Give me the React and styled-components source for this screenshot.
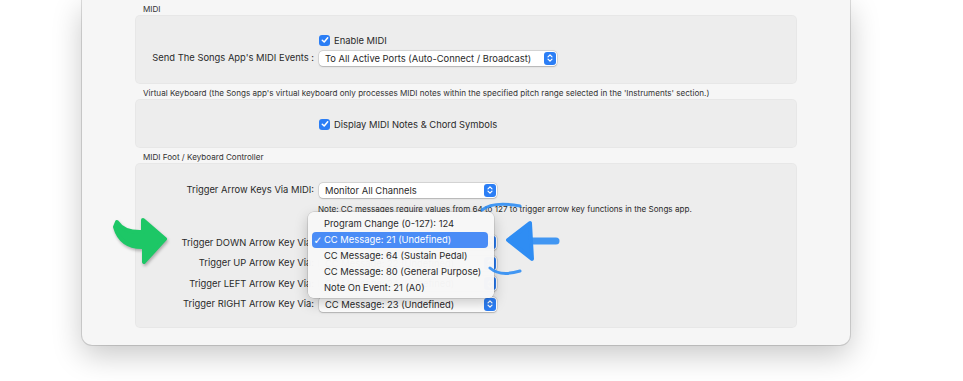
import styled, { createGlobalStyle } from "styled-components";

const GlobalStyle = createGlobalStyle`
  html, body {
    margin: 0;
    padding: 0;
    background: #ffffff;
  }
  body {
    font-family: "Inter", "Liberation Sans", sans-serif;
    color: #262626;
    -webkit-font-smoothing: antialiased;
  }
`;

const Page = styled.div`
  width: 963px;
  height: 381px;
  overflow: hidden;
`;

/* Preferences window, its top is cut off by the screenshot */
const Window = styled.div`
  position: relative;
  margin-left: 82px;
  width: 768px;
  height: 345px;
  box-sizing: border-box;
  padding: 3px 53px 0;
  background: #f6f6f6;
  border-radius: 0 0 10px 10px;
  box-shadow:
    0 0 0 1px rgba(0, 0, 0, 0.13),
    0 10px 30px rgba(0, 0, 0, 0.22);
`;

const SectionLabel = styled.div`
  height: 12px;
  line-height: 13px;
  padding-left: 8px;
  font-size: 8.1px;
  color: #333;
  white-space: nowrap;
`;

const Box = styled.div`
  position: relative;
  height: ${(p) => p.$h}px;
  box-sizing: border-box;
  padding-top: ${(p) => p.$pt}px;
  margin-bottom: 3px;
  background: #ededed;
  border-radius: 5px;
  box-shadow: inset 0 0 0 1px rgba(0, 0, 0, 0.025);
  display: grid;
  grid-template-columns: 179px auto;
  column-gap: 5px;
  align-content: start;
  row-gap: ${(p) => p.$gap || 0}px;
`;

const Label = styled.div`
  height: ${(p) => p.$h || 16}px;
  line-height: ${(p) => p.$h || 16}px;
  text-align: right;
  font-size: 9.4px;
  white-space: nowrap;
  color: #2a2a2a;
`;

const Control = styled.div`
  display: flex;
  align-items: center;
  height: ${(p) => p.$h || 16}px;
  margin-left: ${(p) => p.$ml || 0}px;
`;

const CheckLine = styled.label`
  display: flex;
  align-items: center;
  gap: 4px;
  font-size: 9.4px;
  color: #2a2a2a;
  white-space: nowrap;
`;

const CheckBox = styled.span`
  width: 11px;
  height: 11px;
  border-radius: 3px;
  background: #2b7ef5;
  display: flex;
  align-items: center;
  justify-content: center;
`;

const SelectBox = styled.div`
  width: ${(p) => p.$w}px;
  height: 15px;
  box-sizing: border-box;
  display: flex;
  align-items: center;
  justify-content: space-between;
  padding: 0 1px 0 6px;
  background: #ffffff;
  border-radius: 4px;
  box-shadow:
    0 0 0 0.5px rgba(0, 0, 0, 0.16),
    0 0.5px 1.5px rgba(0, 0, 0, 0.18);
  font-size: 9.4px;
  color: #2a2a2a;
  white-space: nowrap;
`;

const Stepper = styled.span`
  width: 12px;
  height: 13px;
  border-radius: 3px;
  background: #2b7ef5;
  display: flex;
  align-items: center;
  justify-content: center;
`;

const Note = styled.div`
  height: 12px;
  line-height: 12px;
  font-size: 8.1px;
  color: #2a2a2a;
  white-space: nowrap;
`;

const Menu = styled.div`
  position: absolute;
  left: 173px;
  top: 49px;
  width: 186px;
  box-sizing: border-box;
  padding: 4px 6px 2px 4px;
  background: rgba(247, 247, 247, 0.98);
  border-radius: 6px;
  box-shadow:
    0 0 0 0.5px rgba(0, 0, 0, 0.18),
    0 5px 14px rgba(0, 0, 0, 0.22);
  z-index: 2;
`;

const MenuItem = styled.div`
  position: relative;
  height: 16px;
  line-height: 16px;
  padding-left: 12px;
  border-radius: 4px;
  font-size: 9.4px;
  white-space: nowrap;
  color: ${(p) => (p.$active ? "#ffffff" : "#2a2a2a")};
  background: ${(p) => (p.$active ? "#4a8cf6" : "transparent")};
`;

const Tick = styled.span`
  position: absolute;
  left: 1.5px;
  top: 0;
  font-size: 10.5px;
  font-family: "DejaVu Sans", sans-serif;
`;

const GreenArrow = styled.svg`
  position: absolute;
  left: 28px;
  top: 212px;
  filter: drop-shadow(1px 2px 1.5px rgba(0, 0, 0, 0.28));
  z-index: 3;
`;

const BlueMarks = styled.svg`
  position: absolute;
  left: 396px;
  top: 198px;
  z-index: 3;
`;

function Check() {
  return (
    <CheckBox>
      <svg width="8" height="8" viewBox="0 0 8 8">
        <path d="M1.3 4.2 L3.2 6 L6.7 1.8" fill="none" stroke="#fff" strokeWidth="1.5" strokeLinecap="round" strokeLinejoin="round" />
      </svg>
    </CheckBox>
  );
}

function Select({ width, children }) {
  return (
    <SelectBox $w={width}>
      <span>{children}</span>
      <Stepper>
        <svg width="8" height="10" viewBox="0 0 8 10">
          <path d="M2 3.8 L4 1.8 L6 3.8 M2 6.2 L4 8.2 L6 6.2" fill="none" stroke="#fff" strokeWidth="1.2" strokeLinecap="round" strokeLinejoin="round" />
        </svg>
      </Stepper>
    </SelectBox>
  );
}

const arrowRows = [
  ["Trigger DOWN Arrow Key Via:", "CC Message: 21 (Undefined)"],
  ["Trigger UP Arrow Key Via:", "CC Message: 22 (Undefined)"],
  ["Trigger LEFT Arrow Key Via:", "CC Message: 24 (Undefined)"],
  ["Trigger RIGHT Arrow Key Via:", "CC Message: 23 (Undefined)"],
];

const menuItems = [
  "Program Change (0-127): 124",
  "CC Message: 21 (Undefined)",
  "CC Message: 64 (Sustain Pedal)",
  "CC Message: 80 (General Purpose)",
  "Note On Event: 21 (A0)",
];

export default function App() {
  return (
    <Page>
      <GlobalStyle />
      <Window>
        <SectionLabel>MIDI</SectionLabel>
        <Box $h={69} $pt={18} $gap={3}>
          <Label $h={14} />
          <Control $h={14}>
            <CheckLine>
              <Check />
              Enable MIDI
            </CheckLine>
          </Control>
          <Label>Send The Songs App's MIDI Events :</Label>
          <Control>
            <Select width={238}>To All Active Ports (Auto-Connect / Broadcast)</Select>
          </Control>
        </Box>

        <SectionLabel>
          Virtual Keyboard (the Songs app's virtual keyboard only processes MIDI notes within the specified pitch range selected in the 'Instruments' section.)
        </SectionLabel>
        <Box $h={49} $pt={18}>
          <Label $h={14} />
          <Control $h={14}>
            <CheckLine>
              <Check />
              Display MIDI Notes &amp; Chord Symbols
            </CheckLine>
          </Control>
        </Box>

        <SectionLabel>MIDI Foot / Keyboard Controller</SectionLabel>
        <Box $h={165} $pt={19} $gap={4.5}>
          <Label>Trigger Arrow Keys Via MIDI:</Label>
          <Control>
            <Select width={178}>Monitor All Channels</Select>
          </Control>
          <Label $h={12} />
          <Control $h={12} $ml={-1}>
            <Note>Note: CC messages require values from 64 to 127 to trigger arrow key functions in the Songs app.</Note>
          </Control>
          <Label $h={11} />
          <Control $h={11} />
          {arrowRows.map(([label, value]) => (
            <>
              <Label key={label}>{label}</Label>
              <Control key={label + "c"}>
                <Select width={178}>{value}</Select>
              </Control>
            </>
          ))}

          <Menu>
            {menuItems.map((item, i) => (
              <MenuItem key={item} $active={i === 1}>
                {i === 1 && <Tick>✓</Tick>}
                {item}
              </MenuItem>
            ))}
          </Menu>
        </Box>

        <GreenArrow width="62" height="56" viewBox="0 0 62 56">
          <path
            d="M7 10 Q14 21 33 20 L33 8 L55 27 L34 50 L34 35 Q11 36 5 15 Z"
            fill="#1dc766"
            stroke="#1dc766"
            strokeWidth="4"
            strokeLinejoin="round"
          />
        </GreenArrow>

        <BlueMarks width="86" height="86" viewBox="0 0 86 86">
          <g fill="none" stroke="#2f8df3" strokeLinecap="round" opacity="0.9">
            <path d="M4 12 Q15 3 42 8" strokeWidth="3" />
            <path d="M12 70 Q22 79 42 73" strokeWidth="3" />
            <path d="M51 43 L78 43" strokeWidth="7" />
          </g>
          <path
            d="M30 42 L52 25 L54 61 Z"
            fill="#2f8df3"
            stroke="#2f8df3"
            strokeWidth="4"
            strokeLinejoin="round"
          />
        </BlueMarks>
      </Window>
    </Page>
  );
}
